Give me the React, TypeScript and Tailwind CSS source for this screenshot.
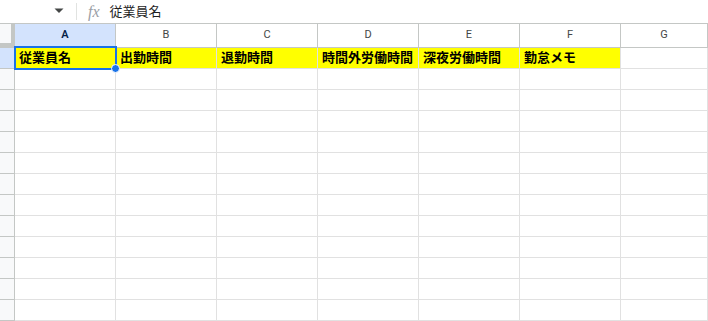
import React from 'react';

const columns = ['A', 'B', 'C', 'D', 'E', 'F', 'G'];
const headers = ['従業員名', '出勤時間', '退勤時間', '時間外労働時間', '深夜労働時間', '勤怠メモ', ''];
const ROW_COUNT = 13;

const cjk = { fontFamily: 'Roboto, "Noto Sans CJK JP", sans-serif' };

function FormulaBar() {
  return (
    <div className="flex h-[23px] items-center bg-white">
      <div className="w-[54px]" />
      {/* name box dropdown */}
      <svg width="10" height="6" viewBox="0 0 10 6" className="mt-[-2px]">
        <path d="M0.5 0.5 L9.5 0.5 L5 5 Z" fill="#444746" />
      </svg>
      <div className="ml-[12px] h-[17px] w-px bg-[#e1e3e1]" />
      <span
        className="ml-[11px] text-[16px] italic leading-none text-[#9aa0a6]"
        style={{ fontFamily: '"Liberation Serif", serif' }}
      >
        fx
      </span>
      <span className="ml-[10px] text-[13px] text-[#1f1f1f]" style={cjk}>
        従業員名
      </span>
    </div>
  );
}

export default function App() {
  return (
    <div className="relative h-[321px] w-[708px] overflow-hidden bg-white">
      <FormulaBar />

      <div className="grid grid-cols-[15px_repeat(6,101px)_1fr] border-t border-[#c4c7c5]">
        {/* corner */}
        <div className="relative h-[24px] border-b border-r border-[#c4c7c5] bg-[#f8f9fa]">
          <div className="absolute right-0 top-0 h-full w-[3px] bg-[#c4c7c5]" />
          <div className="absolute bottom-0 left-0 h-[4px] w-full bg-[#c4c7c5]" />
        </div>
        {columns.map((c, i) => (
          <div
            key={c}
            className={`flex h-[24px] items-center justify-center border-b border-r border-[#c4c7c5] text-[11px] ${
              i === 0 ? 'bg-[#d3e3fd] font-semibold text-[#041e49]' : 'bg-white text-[#444746]'
            }`}
            style={{ fontFamily: 'Roboto, Arial, sans-serif' }}
          >
            {c}
          </div>
        ))}

        {/* row 1 */}
        <div className="h-[21px] border-b border-r border-[#c4c7c5] bg-[#d3e3fd]" />
        {headers.map((h, i) => (
          <div
            key={i}
            className={`flex h-[21px] items-center overflow-hidden whitespace-nowrap border-b border-r border-[#e1e1e1] pl-[4px] text-[13px] font-bold text-black ${
              i < 6 ? 'bg-[#ffff00]' : 'bg-white'
            }`}
            style={cjk}
          >
            {h}
          </div>
        ))}

        {Array.from({ length: ROW_COUNT }).map((_, r) => (
          <React.Fragment key={r}>
            <div className="h-[21px] border-b border-r border-[#c4c7c5] bg-[#f8f9fa]" />
            {columns.map((c) => (
              <div key={c} className="h-[21px] border-b border-r border-[#e1e1e1] bg-white" />
            ))}
          </React.Fragment>
        ))}
      </div>

      {/* active cell A1 */}
      <div className="pointer-events-none absolute left-[14px] top-[46px] h-[24px] w-[103px] border-2 border-[#1a73e8]" />
      <div className="absolute left-[111px] top-[64px] h-[9px] w-[9px] rounded-full border border-white bg-[#1a73e8]" />
    </div>
  );
}
